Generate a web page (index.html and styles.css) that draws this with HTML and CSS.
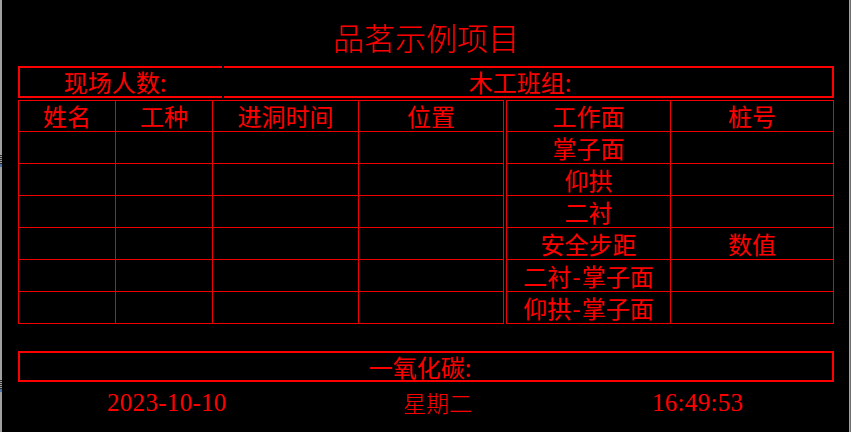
FILE: index.html
```html
<!DOCTYPE html>
<html lang="zh">
<head>
<meta charset="utf-8">
<title>品茗示例项目</title>
<link rel="stylesheet" href="styles.css">
</head>
<body>
<div class="screen">
  <div class="edge edge-left">
    <span class="grip grip-top"></span>
    <span class="grip grip-bottom"></span>
  </div>
  <main class="board">
    <h1 class="title">品茗示例项目</h1>
    <div class="summary">
      <div class="summary-cell summary-left">现场人数:</div>
      <div class="summary-cell summary-right">木工班组:</div>
    </div>
    <div class="tables">
      <table class="grid grid-left">
        <colgroup>
          <col class="c-name"><col class="c-type"><col class="c-time"><col class="c-pos">
        </colgroup>
        <thead>
          <tr class="head"><th>姓名</th><th>工种</th><th>进洞时间</th><th>位置</th></tr>
        </thead>
        <tbody>
          <tr><td></td><td></td><td></td><td></td></tr>
          <tr><td></td><td></td><td></td><td></td></tr>
          <tr><td></td><td></td><td></td><td></td></tr>
          <tr><td></td><td></td><td></td><td></td></tr>
          <tr><td></td><td></td><td></td><td></td></tr>
          <tr><td></td><td></td><td></td><td></td></tr>
        </tbody>
      </table>
      <table class="grid grid-right">
        <colgroup>
          <col class="c-face"><col class="c-pile">
        </colgroup>
        <thead>
          <tr class="head"><th>工作面</th><th>桩号</th></tr>
        </thead>
        <tbody>
          <tr><td>掌子面</td><td></td></tr>
          <tr><td>仰拱</td><td></td></tr>
          <tr><td>二衬</td><td></td></tr>
          <tr><td>安全步距</td><td>数值</td></tr>
          <tr><td>二衬<span class="dash">-</span>掌子面</td><td></td></tr>
          <tr><td>仰拱<span class="dash">-</span>掌子面</td><td></td></tr>
        </tbody>
      </table>
    </div>
    <div class="gas">一氧化碳:</div>
    <div class="clock">
      <span class="date">2023-10-10</span>
      <span class="weekday">星期二</span>
      <span class="time">16:49:53</span>
    </div>
  </main>
  <div class="edge edge-right"></div>
</div>
</body>
</html>
```

FILE: styles.css
```css
html, body {
  margin: 0;
  padding: 0;
  background: #000;
}

.screen {
  display: flex;
  width: 851px;
  height: 432px;
  background: #000;
  overflow: hidden;
}

.edge {
  flex: 0 0 2px;
  background: #a0a0a0;
  position: relative;
}

.edge-right {
  background: linear-gradient(to right, #a0a0a0 0 1px, #6e6e6e 1px 2px);
}

.grip {
  position: absolute;
  left: 0;
  width: 2px;
  height: 12px;
  background: repeating-linear-gradient(to bottom, #303030 0 1px, #a0a0a0 1px 2px);
}

.grip::after {
  content: "";
  position: absolute;
  left: 0;
  bottom: 0;
  width: 2px;
  height: 3px;
  background: #4a78a8;
}

.grip-top { top: 155px; }
.grip-bottom { top: 380px; }

.board {
  flex: 1;
  padding-left: 16px;
  color: #f00;
  font-family: "Noto Sans CJK SC", "Noto Sans", sans-serif;
}

.title {
  box-sizing: border-box;
  width: 816px;
  height: 66px;
  margin: 0;
  padding-top: 21px;
  font-size: 31px;
  font-weight: 300;
  line-height: 31px;
  text-align: center;
}

.summary {
  display: flex;
  width: 816px;
  height: 32px;
  column-gap: 2px;
}

.summary-cell {
  box-sizing: border-box;
  height: 32px;
  border: 2px solid #f00;
  font-size: 24px;
  font-weight: 400;
  line-height: 28px;
  text-align: center;
}

.summary-left {
  width: 204px;
  border-right: 0;
  padding-right: 12px;
}

.summary-right {
  flex: 1;
  border-left: 0;
  padding-right: 16px;
}

.tables {
  display: flex;
  width: 816px;
  margin-top: 2px;
  column-gap: 2px;
  align-items: flex-start;
}

.grid {
  border-collapse: collapse;
  table-layout: fixed;
  font-size: 24px;
}

.grid-left { width: 485px; }
.grid-right { width: 327px; }

.c-name { width: 97px; }
.c-type { width: 97px; }
.c-time { width: 146px; }
.c-pos { width: 145px; }
.c-face { width: 164px; }
.c-pile { width: 163px; }

.grid th,
.grid td {
  border: 1px solid #e00;
  padding: 0;
  height: 31px;
  line-height: 31px;
  text-align: center;
  font-weight: 400;
  white-space: nowrap;
}

.grid tr.head th {
  height: 30px;
  line-height: 30px;
}

.dash {
  display: inline-block;
  padding: 0 1px;
}

.gas {
  box-sizing: border-box;
  width: 816px;
  height: 31px;
  margin-top: 27px;
  border: 2px solid #f00;
  font-size: 24px;
  font-weight: 400;
  line-height: 27px;
  text-align: center;
  padding-right: 12px;
}

.clock {
  display: grid;
  grid-template-columns: 296px 249px auto;
  margin-top: 8px;
  padding-left: 89px;
  font-family: "Liberation Serif", "Noto Sans CJK SC", serif;
  font-size: 25px;
  line-height: 25px;
  letter-spacing: 0.3px;
}

.weekday {
  font-family: "Noto Sans CJK SC", sans-serif;
  font-size: 23px;
  font-weight: 300;
  letter-spacing: 0;
}
```
